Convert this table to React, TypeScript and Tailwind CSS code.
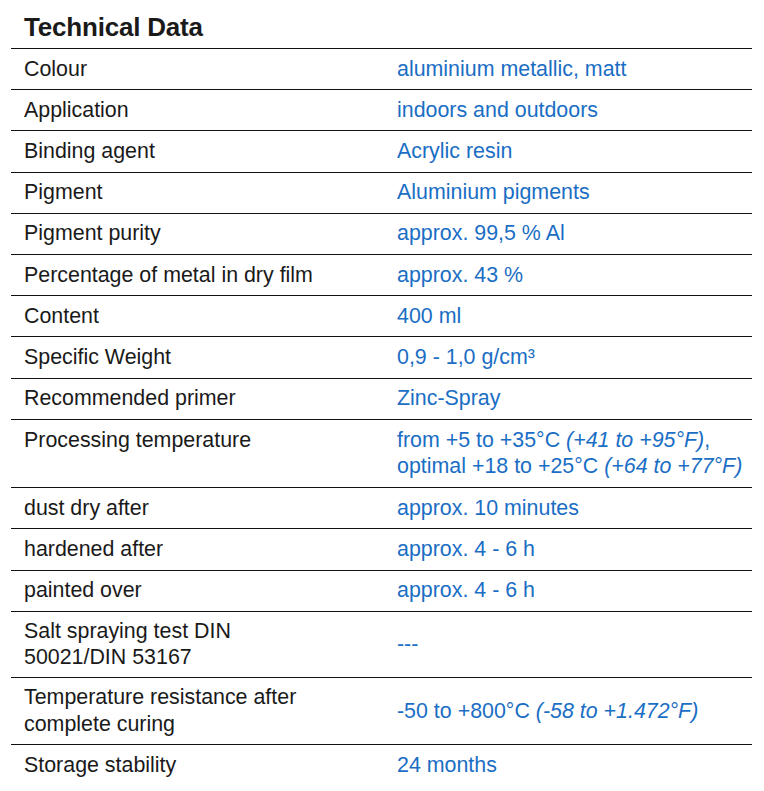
import React from 'react';

type Row = {
  label: React.ReactNode;
  value: React.ReactNode;
  h?: string;
  labelTop?: boolean;
};

const rows: Row[] = [
  { label: 'Colour', value: 'aluminium metallic, matt' },
  { label: 'Application', value: 'indoors and outdoors' },
  { label: 'Binding agent', value: 'Acrylic resin' },
  { label: 'Pigment', value: 'Aluminium pigments' },
  { label: 'Pigment purity', value: 'approx. 99,5 % Al' },
  { label: 'Percentage of metal in dry film', value: 'approx. 43 %' },
  { label: 'Content', value: '400 ml' },
  { label: 'Specific Weight', value: '0,9 - 1,0 g/cm³' },
  { label: 'Recommended primer', value: 'Zinc-Spray' },
  {
    label: 'Processing temperature',
    value: (
      <>
        from +5 to +35°C <i>(+41 to +95°F)</i>,
        <br />
        optimal +18 to +25°C <i>(+64 to +77°F)</i>
      </>
    ),
    h: 'h-[68.5px]',
    labelTop: true,
  },
  { label: 'dust dry after', value: 'approx. 10 minutes' },
  { label: 'hardened after', value: 'approx. 4 - 6 h' },
  { label: 'painted over', value: 'approx. 4 - 6 h' },
  {
    label: (
      <>
        Salt spraying test DIN
        <br />
        50021/DIN 53167
      </>
    ),
    value: '---',
    h: 'h-[66.3px]',
  },
  {
    label: (
      <>
        Temperature resistance after
        <br />
        complete curing
      </>
    ),
    value: (
      <>
        -50 to +800°C <i>(-58 to +1.472°F)</i>
      </>
    ),
    h: 'h-[67px]',
  },
  { label: 'Storage stability', value: '24 months' },
];

export default function App() {
  return (
    <div
      className="w-[764px] h-[791px] bg-white text-[#1a1a1a]"
      style={{ fontFamily: '"Liberation Sans", Arial, sans-serif' }}
    >
      <div className="ml-[11px] w-[741px]">
        {/* Cabecera */}
        <h1 className="h-[48px] pl-[13px] pt-[11px] text-[26px] font-bold leading-[32px] tracking-[-0.2px]">
          Technical Data
        </h1>

        {/* Filas */}
        {rows.map((row, i) => (
          <div
            key={i}
            className={`grid grid-cols-[386px_1fr] border-t border-[#111] text-[21.4px] leading-[26.8px] ${
              row.h ?? 'h-[41.2px]'
            }`}
          >
            <div className={`flex pl-[13px] ${row.labelTop ? 'items-start pt-[7px]' : 'items-center'}`}>
              <span>{row.label}</span>
            </div>
            <div className="flex items-center text-[#1a6ec4]">
              <span>{row.value}</span>
            </div>
          </div>
        ))}
      </div>
    </div>
  );
}
